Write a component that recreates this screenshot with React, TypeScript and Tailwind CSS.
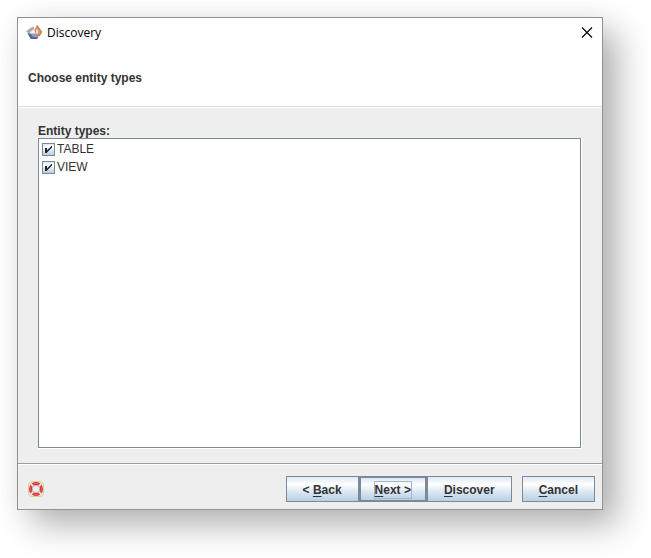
import { useState } from "react";
import type { ReactNode } from "react";

type EntityType = {
  name: string;
  selected: boolean;
};

const INITIAL_TYPES: EntityType[] = [
  { name: "TABLE", selected: true },
  { name: "VIEW", selected: true },
];

function AppIcon() {
  return (
    <svg viewBox="0 0 16 16" className="h-4 w-4" aria-hidden="true">
      <path d="M0 6.5L4.5 3 6 5.5 3 8.5z" fill="#a3a4b4" />
      <path d="M4 3l3.5-1.5 1 2.5-2.5 2z" fill="#cfa28e" />
      <path d="M3.5 7.5L8 4.5l1.5 4z" fill="#f3ebe9" />
      <path d="M1.5 8.5h10.5l2 0.5-3 5H5z" fill="#8b9dc8" />
      <path d="M1.5 8.5L5 14h6l1-2H7L4.5 8.5z" fill="#586893" />
      <path d="M8.5 5L11 0l5 7-3 4.5-3.5-2z" fill="#c98a62" />
      <path d="M10 5.5l1.2-2.5 1.3 4-1 2.2-1.8-1z" fill="#f6dcc6" />
      <path d="M11 0l5 7-3 4.5-0.5-5z" fill="#dd9a66" />
      <path d="M11 0.5L15.6 7 13 11" fill="none" stroke="#86604f" strokeWidth="0.6" />
    </svg>
  );
}

function HelpIcon() {
  return (
    <svg viewBox="0 0 16 16" className="h-4 w-4" aria-hidden="true">
      <rect x="0.5" y="0.5" width="15" height="15" rx="3.5" fill="#f0ece2" stroke="#ddcda4" />
      <circle cx="8" cy="8" r="5.4" fill="none" stroke="#d93434" strokeWidth="3.2" />
      <circle cx="8" cy="8" r="5.6" fill="none" stroke="#ee6666" strokeWidth="0.8" />
      <path
        d="M3 3l2.8 2.8M13 3l-2.8 2.8M3 13l2.8-2.8M13 13l-2.8-2.8"
        stroke="#f2f0f0"
        strokeWidth="1.7"
      />
      <circle cx="8" cy="8" r="3.7" fill="#eeeeee" stroke="#9c6a6a" strokeWidth="0.4" />
    </svg>
  );
}

type WizardButtonProps = {
  children: ReactNode;
  className?: string;
};

function WizardButton({ children, className = "border px-4" }: WizardButtonProps) {
  return (
    <button
      type="button"
      className={`flex h-[26px] items-center justify-center border-[#7a8a99] bg-[linear-gradient(#dde8f3,#ffffff_30%,#dde8f3_60%,#b8cfe5)] pt-[2px] font-bold ${className}`}
    >
      {children}
    </button>
  );
}

function Mnemonic({ children }: { children: ReactNode }) {
  return <span className="underline decoration-1 underline-offset-2">{children}</span>;
}

export default function App() {
  const [types, setTypes] = useState(INITIAL_TYPES);

  const toggleType = (name: string) => {
    setTypes((current) =>
      current.map((type) => (type.name === name ? { ...type, selected: !type.selected } : type)),
    );
  };

  return (
    <div className="flex min-h-screen bg-white pt-[17px] pr-12 pb-12 pl-[17px] font-['Liberation_Sans',Arial,sans-serif] text-xs text-[#333333]">
      <main className="flex flex-1 flex-col border border-[#919191] bg-[#eeeeee] shadow-[15px_15px_32px_rgba(0,0,0,0.3),0_0_24px_rgba(0,0,0,0.04)]">
        <header className="border-b border-[#dddddd] bg-white">
          <div className="flex h-[30px] items-center justify-between px-2">
            <div className="flex items-center gap-[5px]">
              <AppIcon />
              <h1 className="font-['Open_Sans','Noto_Sans',sans-serif] text-black">Discovery</h1>
            </div>
            <button type="button" aria-label="Close" className="p-px text-black">
              <svg viewBox="0 0 12 12" className="h-3 w-3" fill="none" stroke="currentColor" strokeWidth="1.1">
                <path d="M1 0.5l10 10M11 0.5l-10 10" />
              </svg>
            </button>
          </div>
          <h2 className="px-[10px] pt-[22px] pb-5 leading-4 font-bold">Choose entity types</h2>
        </header>

        <section className="flex flex-1 flex-col border-t border-white px-5 pt-4 pb-[14px]">
          <h3 id="entity-types" className="leading-[14px] font-bold">
            Entity types:
          </h3>
          <div className="flex flex-1 border-r border-b border-white">
            <ul
              aria-labelledby="entity-types"
              className="flex-1 border border-[#7a8a99] bg-white px-[3px] py-px"
            >
              {types.map((type) => (
                <li key={type.name}>
                  <label className="flex h-[18px] w-fit items-center gap-[2px]">
                    <span className="relative flex">
                      <input
                        type="checkbox"
                        checked={type.selected}
                        onChange={() => toggleType(type.name)}
                        className="peer h-[13px] w-[13px] appearance-none border border-[#7a8a99] bg-[linear-gradient(#dde8f3,#ffffff_30%,#dde8f3_60%,#b8cfe5)]"
                      />
                      <svg
                        viewBox="0 0 13 13"
                        className="pointer-events-none absolute inset-0 hidden peer-checked:block"
                        fill="#222222"
                        aria-hidden="true"
                      >
                        <path d="M3 5h2v2.4L9.4 3H10v1.6L5 9.6V10H3z" />
                      </svg>
                    </span>
                    {type.name}
                  </label>
                </li>
              ))}
            </ul>
          </div>
        </section>

        <footer className="border-t border-[#a0a0a0]">
          <div className="flex items-center justify-between border-t border-white pt-[11px] pr-[7px] pb-[7px] pl-[10px]">
            <button type="button" aria-label="Help">
              <HelpIcon />
            </button>
            <div className="flex">
              <WizardButton>
                <span>
                  &lt; <Mnemonic>B</Mnemonic>ack
                </span>
              </WizardButton>
              <WizardButton className="border-2 px-[13px]">
                <span className="border border-[#a3b8cc] leading-4">
                  <Mnemonic>N</Mnemonic>ext &gt;
                </span>
              </WizardButton>
              <WizardButton>
                <span>
                  <Mnemonic>D</Mnemonic>iscover
                </span>
              </WizardButton>
              <WizardButton className="ml-[10px] border px-4">
                <span>
                  <Mnemonic>C</Mnemonic>ancel
                </span>
              </WizardButton>
            </div>
          </div>
        </footer>
      </main>
    </div>
  );
}
